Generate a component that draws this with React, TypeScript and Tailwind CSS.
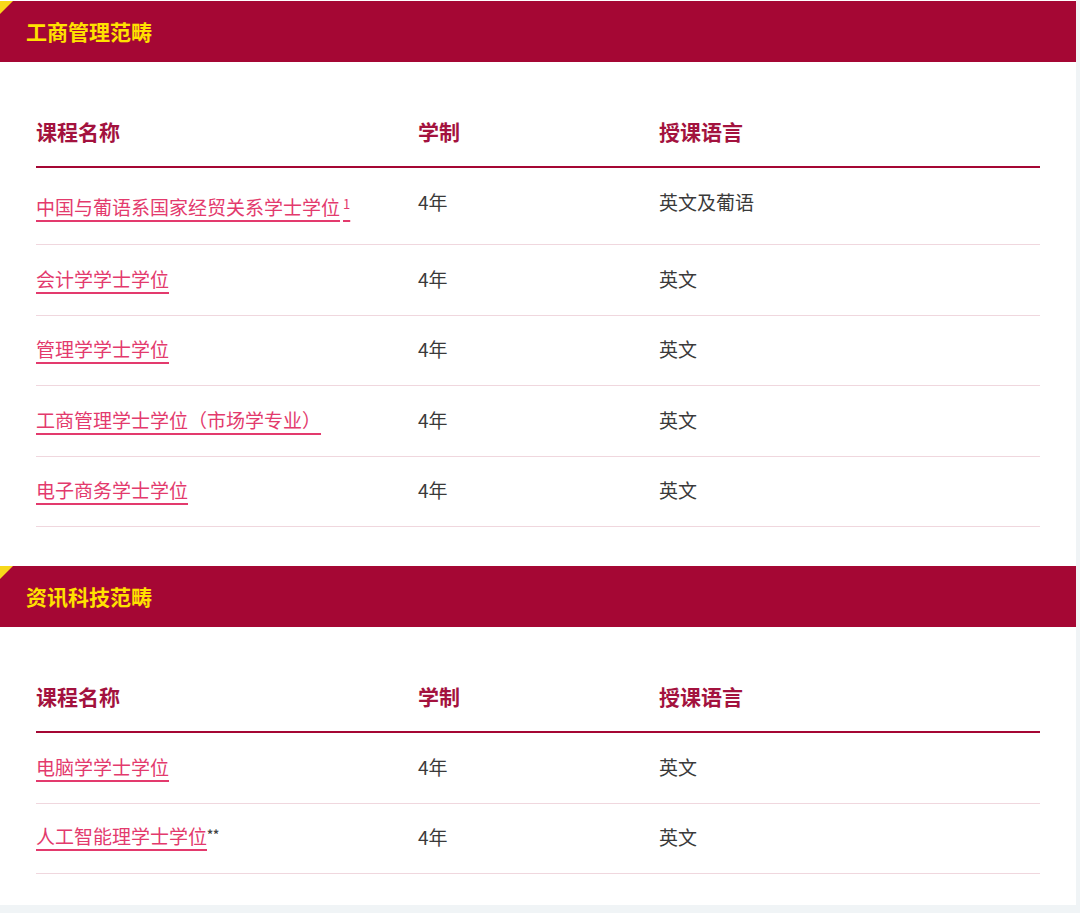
const font = {
  fontFamily: '"Noto Sans CJK SC", "Noto Sans", sans-serif',
};

type Row = { name: string; sup?: string; note?: string; years: string; lang: string };

const business: Row[] = [
  { name: "中国与葡语系国家经贸关系学士学位", sup: "1", years: "4年", lang: "英文及葡语" },
  { name: "会计学学士学位", years: "4年", lang: "英文" },
  { name: "管理学学士学位", years: "4年", lang: "英文" },
  { name: "工商管理学士学位（市场学专业）", years: "4年", lang: "英文" },
  { name: "电子商务学士学位", years: "4年", lang: "英文" },
];

const tech: Row[] = [
  { name: "电脑学学士学位", years: "4年", lang: "英文" },
  { name: "人工智能理学士学位", note: "**", years: "4年", lang: "英文" },
];

const Banner = ({ title }: { title: string }) => (
  <div className="relative h-[61px] bg-[#a50734] flex items-center pl-[26px]">
    <svg className="absolute left-0 top-0" width="13" height="13" viewBox="0 0 13 13">
      <polygon points="0,0 13,0 0,13" fill="#f7d81a" />
    </svg>
    <h2 className="text-[21px] font-bold text-[#ffe100] leading-none">{title}</h2>
  </div>
);

const CourseTable = ({ rows }: { rows: Row[] }) => (
  <div className="px-[36px]">
    <div className="grid grid-cols-[382px_241px_1fr] pt-[54px] pb-[20px] border-b-2 border-[#a50734] text-[21px] font-bold text-[#a3123e] leading-[30px]">
      <div>课程名称</div>
      <div>学制</div>
      <div>授课语言</div>
    </div>
    {rows.map((r) => (
      <div
        key={r.name}
        className={`grid grid-cols-[382px_241px_1fr] items-center border-b border-[#f0d7de] text-[19px] leading-[26px] ${
          r.sup ? "h-[77px]" : "h-[70.5px]"
        }`}
      >
        <div className={r.sup ? "mt-[2px]" : "-mt-[2px]"}>
          <a href="#" className="text-[#e33a6d] underline underline-offset-[5px] decoration-[1.5px]">
            {r.name}
            {r.sup && <sup className="text-[13px] ml-[3px] relative -top-[6px]">{r.sup}</sup>}
          </a>
          {r.note && <span className="text-[12px] font-bold text-[#444] relative -top-[5px]">{r.note}</span>}
        </div>
        <div className={`text-[#3a3a3a] ${r.sup ? "-mt-[9px]" : "-mt-[2px]"}`}>{r.years}</div>
        <div className={`text-[#3a3a3a] ${r.sup ? "-mt-[9px]" : "-mt-[2px]"}`}>{r.lang}</div>
      </div>
    ))}
  </div>
);

export default function App() {
  return (
    <div style={font} className="w-[1080px] h-[913px] bg-[#f0f4f6] overflow-hidden">
      <div className="w-[1076px] bg-white pt-[1px] h-[905px]">
        <Banner title="工商管理范畴" />
        <CourseTable rows={business} />
        <div className="h-[39px]" />
        <Banner title="资讯科技范畴" />
        <CourseTable rows={tech} />
      </div>
    </div>
  );
}
